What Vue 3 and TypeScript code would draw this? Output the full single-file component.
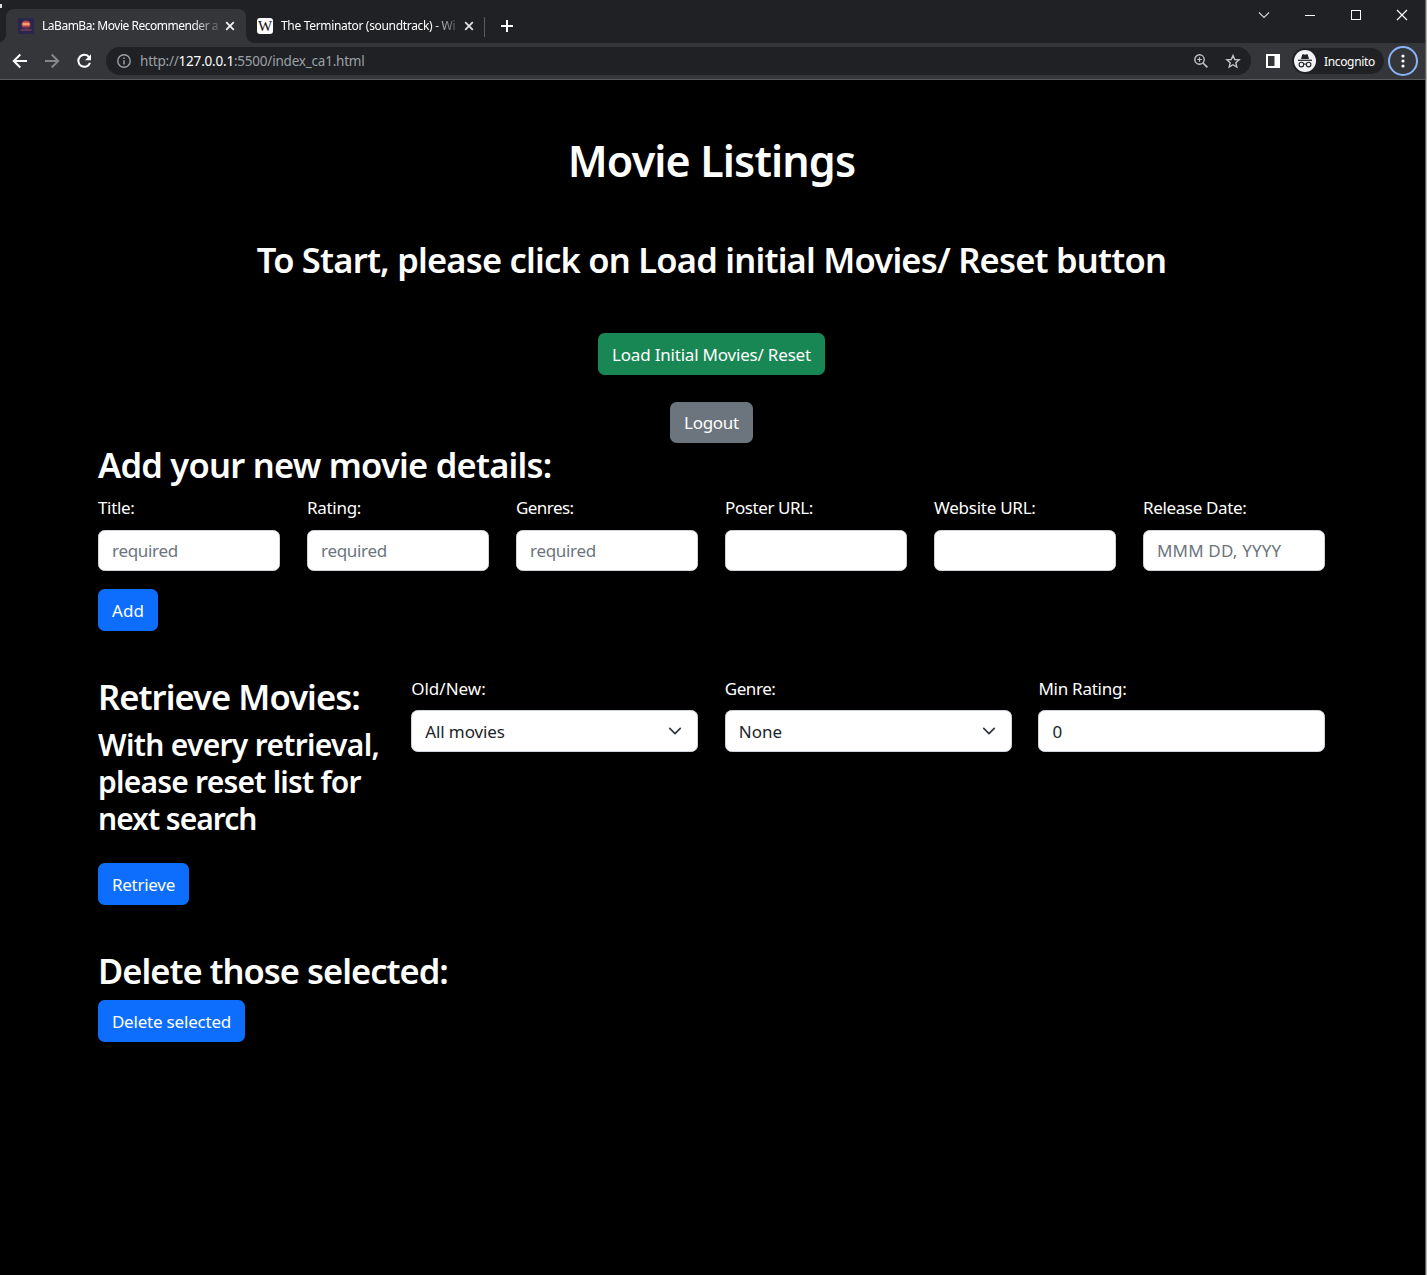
<script setup lang="ts">
interface Field {
  label: string
  placeholder: string
  cls: string
}

const fields: Field[] = [
  { label: 'Title:', placeholder: 'required', cls: 'f-title' },
  { label: 'Rating:', placeholder: 'required', cls: 'f-rating' },
  { label: 'Genres:', placeholder: 'required', cls: 'f-genres' },
  { label: 'Poster URL:', placeholder: '', cls: 'f-poster' },
  { label: 'Website URL:', placeholder: '', cls: 'f-website' },
  { label: 'Release Date:', placeholder: 'MMM DD, YYYY', cls: 'f-date' },
]
</script>

<template>
  <div class="window">
    <div class="main">
      <header class="tabs">
        <div class="tab active">
          <svg class="favicon" width="16" height="16" viewBox="0 0 16 16">
            <rect width="16" height="16" fill="#29264d" />
            <ellipse cx="8" cy="6.500" rx="4.600" ry="4" fill="#a83f4b" />
            <path d="M4.500 5h7v2.500h-7z" fill="#f0a070" />
            <path d="M5 3.800h6v1.200H5z" fill="#d9584e" />
            <path d="M2.500 12h11" stroke="#8d4057" stroke-width="1.200" />
            <path d="M6 9.500h4" stroke="#5a2c4c" stroke-width="1" />
          </svg>
          <span class="tab-title t1">LaBamBa: Movie Recommender a</span>
          <svg class="x" width="10" height="10" viewBox="0 0 10 10"><path d="M1.2 1.2l7.6 7.6M8.8 1.2L1.2 8.8" stroke="#f1f3f4" stroke-width="1.8" /></svg>
        </div>
        <div class="tab second">
          <span class="wiki">W</span>
          <span class="tab-title t2">The Terminator (soundtrack) - Wi</span>
          <svg class="x" width="10" height="10" viewBox="0 0 10 10"><path d="M1.2 1.2l7.6 7.6M8.8 1.2L1.2 8.8" stroke="#dfe1e5" stroke-width="1.8" /></svg>
        </div>
        <span class="sep"></span>
        <svg class="plus" width="12" height="12" viewBox="0 0 12 12"><path d="M6 0v12M0 6h12" stroke="#fff" stroke-width="2" /></svg>
        <svg class="winctl" width="160" height="30" viewBox="0 0 160 30" fill="none" stroke="#fff">
          <path d="M5 12.500l5 5 5-5" stroke="#d4d5d7" stroke-width="1.100" />
          <path d="M51 15.500h10" />
          <rect x="97.500" y="10.500" width="9" height="9" />
          <path d="M143 10l10 10M153 10l-10 10" stroke-width="1.200" />
        </svg>
      </header>

      <div class="toolbar">
        <svg class="nav" width="100" height="36" viewBox="0 0 100 36" fill="none">
          <path d="M27 18H14M20.300 11.500L13.800 18l6.500 6.500" stroke="#fff" stroke-width="2" />
          <path d="M45 18h13M51.700 11.500L58.200 18l-6.500 6.500" stroke="#85878a" stroke-width="2" />
          <path d="M89.200 14.300A6 6 0 1 0 90 19.800" stroke="#fff" stroke-width="2" />
          <path d="M91 11.300v6h-6z" fill="#fff" />
        </svg>
        <div class="omnibox">
          <svg width="14" height="14" viewBox="0 0 14 14" fill="none" stroke="#9aa0a6">
            <circle cx="7" cy="7" r="6.200" stroke-width="1.400" />
            <path d="M7 6.200v4.300M7 3.500v1.500" stroke-width="1.500" />
          </svg>
          <span class="url">http://<b>127.0.0.1</b>:5500/index_ca1.html</span>
          <svg class="omni-icons" width="50" height="20" viewBox="0 0 50 20" fill="none" stroke="#c2c4c8">
            <circle cx="7.500" cy="8.500" r="4.700" stroke-width="1.400" />
            <path d="M11 12l4.400 4.400" stroke-width="1.700" />
            <path d="M7.500 6.200v4.600M5.200 8.500h4.600" stroke-width="1.200" />
            <path d="M41 4.500l1.750 4 4.350.4-3.300 2.850 1 4.250-3.800-2.250L37.200 16l1-4.250-3.300-2.850 4.350-.4z" stroke-width="1.400" />
          </svg>
        </div>
        <svg class="panel" width="14" height="14" viewBox="0 0 14 14"><path d="M1 1h12v12H1z" fill="none" stroke="#fff" stroke-width="2" /><path d="M8.500 1H13v12H8.500z" fill="#fff" /></svg>
        <div class="incog">
          <svg width="22" height="22" viewBox="0 0 22 22">
            <circle cx="11" cy="11" r="11" fill="#f1f3f4" />
            <path d="M7 9l1.200-4.200q.3-.8 1.100-.5l1.700.5 1.700-.5q.8-.3 1.100.5L15 9z" fill="#202124" />
            <path d="M4 10.300h14" stroke="#202124" stroke-width="1.200" />
            <g fill="none" stroke="#202124" stroke-width="1.100"><circle cx="7.400" cy="14.600" r="2.300" /><circle cx="14.600" cy="14.600" r="2.300" /><path d="M9.700 14.300q1.300-.7 2.600 0" /></g>
          </svg>
          <span>Incognito</span>
        </div>
        <svg class="menu" width="30" height="30" viewBox="0 0 30 30">
          <circle cx="15" cy="15" r="14" fill="none" stroke="#8ab4f8" stroke-width="2" />
          <g fill="#fff"><circle cx="15" cy="10" r="1.600" /><circle cx="15" cy="15" r="1.600" /><circle cx="15" cy="20" r="1.600" /></g>
        </svg>
      </div>

      <main class="page">
        <h1><span>Movie Listings</span></h1>
        <h2 class="start"><span>To Start, please click on Load initial Movies/ Reset button</span></h2>
        <button class="btn success"><span>Load Initial Movies/ Reset</span></button>
        <button class="btn secondary"><span>Logout</span></button>

        <section class="add">
          <h2><span class="h-add">Add your new movie details:</span></h2>
          <div class="row six">
            <div v-for="f in fields" :key="f.label" class="field">
              <label><span :class="f.cls">{{ f.label }}</span></label>
              <input type="text" :placeholder="f.placeholder" :class="f.cls + '-in'" />
            </div>
          </div>
          <button class="btn primary b-add"><span>Add</span></button>
        </section>

        <section class="retrieve">
          <div class="row four">
            <div class="intro">
              <h2><span class="h-ret">Retrieve Movies:</span></h2>
              <h3>
                <span class="l1">With every retrieval,</span><br />
                <span class="l2">please reset list for</span><br />
                <span class="l3">next search</span>
              </h3>
            </div>
            <div class="field">
              <label><span class="s-old">Old/New:</span></label>
              <div class="select"><span class="s-all">All movies</span><svg width="14" height="14" viewBox="0 0 16 16"><path d="m2 5 6 6 6-6" fill="none" stroke="#343a40" stroke-width="2" stroke-linecap="round" stroke-linejoin="round" /></svg></div>
            </div>
            <div class="field">
              <label><span class="s-genre">Genre:</span></label>
              <div class="select"><span class="s-none">None</span><svg width="14" height="14" viewBox="0 0 16 16"><path d="m2 5 6 6 6-6" fill="none" stroke="#343a40" stroke-width="2" stroke-linecap="round" stroke-linejoin="round" /></svg></div>
            </div>
            <div class="field">
              <label><span class="s-min">Min Rating:</span></label>
              <input type="text" value="0" />
            </div>
          </div>
          <button class="btn primary b-ret"><span>Retrieve</span></button>
        </section>

        <section class="delete">
          <h2><span class="h-del">Delete those selected:</span></h2>
          <button class="btn primary b-del"><span>Delete selected</span></button>
        </section>
      </main>
    </div>
    <div class="edge"></div>
    <i class="speck"></i>
  </div>
</template>

<style>
html, body { background: #000; overflow: hidden; }
</style>

<style scoped>
* { box-sizing: border-box; }
.window { position: relative; display: flex; width: 1427px; height: 1275px; font-family: "Noto Sans", "Open Sans", sans-serif; color: #fff; background: #000; overflow: hidden; }
.main { width: 1425px; display: flex; flex-direction: column; }
.edge { width: 2px; background: linear-gradient(90deg, #606060 50%, #b4b4b4 50%); }
.speck { position: absolute; left: 0; top: 4px; width: 2px; height: 4px; background: #ddd; }

.tabs { height: 43px; background: #202124; display: flex; align-items: flex-start; flex: none; }
.tab { display: flex; align-items: center; height: 34px; margin-top: 9px; font-size: 12px; }
.active { position: relative; margin-left: 6px; width: 240px; padding-left: 12px; background: #35363a; border-radius: 8px 8px 0 0; }
.active::before, .active::after { content: ""; position: absolute; bottom: 0; width: 8px; height: 8px; }
.active::before { left: -8px; background: radial-gradient(circle at 0 0, transparent 7.5px, #35363a 8px); }
.active::after { right: -8px; background: radial-gradient(circle at 100% 0, transparent 7.5px, #35363a 8px); }
.favicon { flex: none; margin-right: 8px; }
.tab-title { width: 176px; white-space: nowrap; line-height: 20px; -webkit-mask-image: linear-gradient(90deg, #000 150px, transparent 182px); mask-image: linear-gradient(90deg, #000 150px, transparent 182px); }
.t1 { letter-spacing: -0.48px; }
.t2 { letter-spacing: -0.32px; }
.x { flex: none; margin-left: 7px; }
.second { width: 238px; padding-left: 11px; }
.wiki { width: 16px; height: 16px; margin-right: 8px; flex: none; border-radius: 3px; background: #fff; color: #111; font: 15px/16px "Liberation Serif", serif; display: flex; justify-content: center; letter-spacing: 0; }
.sep { width: 1px; height: 20px; margin-top: 17px; background: #5b5c60; }
.plus { margin: 20px 0 0 16px; }
.winctl { margin-left: auto; margin-right: 11px; }

.toolbar { height: 37px; background: #35363a; border-bottom: 1px solid #58595c; display: flex; align-items: center; flex: none; }
.nav { flex: none; }
.omnibox { margin-left: 6px; width: 1145px; height: 28px; border-radius: 14px; background: #202124; display: flex; align-items: center; padding: 0 9px 0 11px; }
.url { margin-left: 9px; font-size: 13.5px; color: #9aa0a6; letter-spacing: -0.21px; }
.url b { font-weight: 400; color: #fff; }
.omni-icons { margin-left: auto; }
.panel { margin-left: 15px; }
.incog { margin-left: 12px; width: 92px; height: 26px; border-radius: 13px; background: #202124; display: flex; align-items: center; padding-left: 2px; font-size: 12px; }
.incog span { margin-left: 8px; letter-spacing: -0.35px; }
.menu { margin-left: 4px; flex: none; }

.page { width: 1227px; margin-left: 98px; display: flex; flex-direction: column; align-items: center; }
h1, h2, h3 { margin: 0; font-weight: 600; white-space: nowrap; }
h1 { margin-top: 54px; font-size: 43px; line-height: 53px; letter-spacing: -0.87px; }
h2 { font-size: 34.500px; line-height: 42px; }
h3 { margin-top: 8px; font-size: 30px; line-height: 37px; }
.start { margin-top: 52px; letter-spacing: -0.78px; }
section { width: 100%; }
.btn { display: flex; align-items: center; justify-content: center; height: 42px; border: 0; border-radius: 6.600px; padding: 0; color: #fff; font-family: inherit; font-size: 17px; white-space: nowrap; }
.success { margin-top: 52px; width: 227px; background: #198754; letter-spacing: -0.2px; }
.secondary { margin-top: 27px; width: 83px; height: 41px; background: #6c757d; letter-spacing: -0.3px; }
.primary { background: #0d6efd; }
.add { margin-top: 1px; }
.h-add { letter-spacing: -0.76px; }
.h-ret { letter-spacing: -0.92px; }
.h-del { letter-spacing: -1px; }
.l1 { letter-spacing: -0.7px; }
.l2 { letter-spacing: -0.78px; }
.l3 { letter-spacing: -1px; }
.row { display: flex; }
.six { gap: 27px; }
.four { gap: 26.600px; }
.six { margin-top: 9px; }
.six .field { width: 182px; }
.field { flex: none; }
label { display: block; height: 26px; font-size: 17px; line-height: 26px; white-space: nowrap; }
.f-title { letter-spacing: -0.35px; }
.f-rating { letter-spacing: -0.3px; }
.f-genres { letter-spacing: -0.55px; }
.f-poster { letter-spacing: -0.4px; }
.f-website { letter-spacing: -0.25px; }
.f-date { letter-spacing: -0.36px; }
.s-genre { letter-spacing: -0.45px; }
.s-min { letter-spacing: -0.25px; }
.s-all { letter-spacing: -0.1px; }
input, .select { display: block; width: 100%; height: 41px; border: 1px solid #ced4da; border-radius: 6.600px; background: #fff; color: #212529; padding: 0 13px; font-family: inherit; font-size: 17px; outline: none; }
.six input { margin-top: 9px; letter-spacing: -0.3px; }
.six input.f-date-in { letter-spacing: 0.17px; }
input::placeholder { color: #6c757d; opacity: 1; }
.b-add { margin-top: 18px; width: 60px; }
.retrieve { margin-top: 45px; }
.intro { width: 286.600px; flex: none; }
.four .field { width: 287px; }
.four input, .four .select { margin-top: 8px; height: 42px; }
.select { display: flex; align-items: center; justify-content: space-between; padding-right: 15px; }
.b-ret { margin-top: 26px; width: 91px; letter-spacing: -0.25px; }
.delete { margin-top: 45px; }
.b-del { margin-top: 8px; width: 147px; letter-spacing: -0.2px; }
</style>
